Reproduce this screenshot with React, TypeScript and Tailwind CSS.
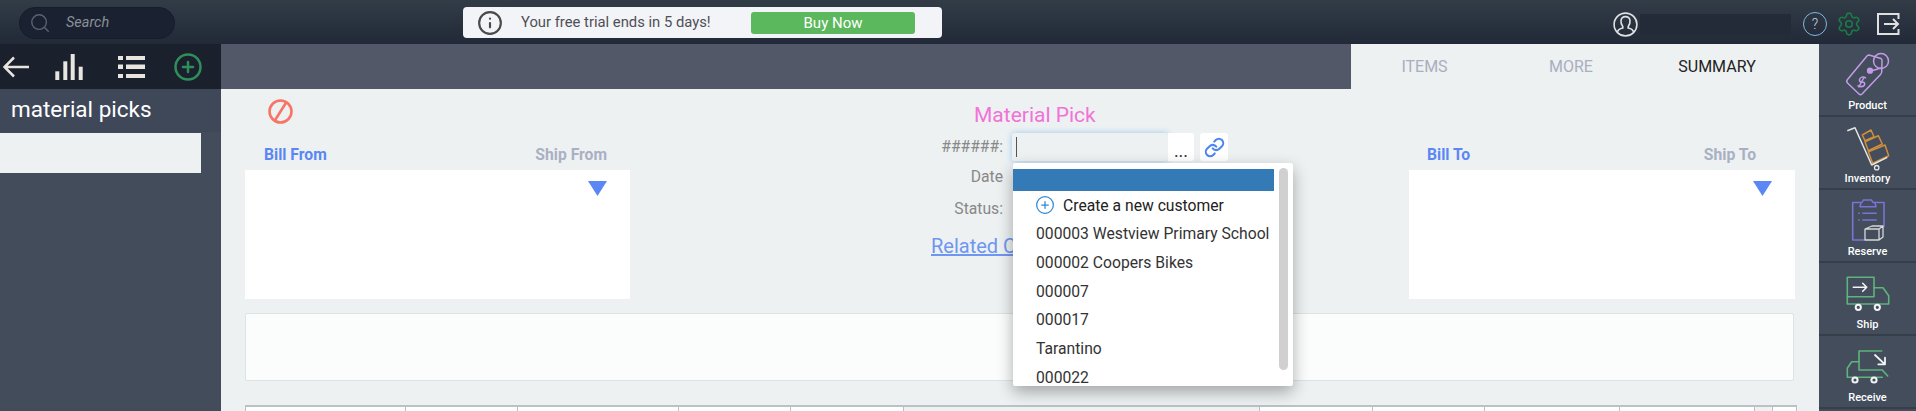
import React from "react";
import { CirclePlus, Info, Link, Search, Settings } from "lucide-react";

const TagIcon = () => (
  <svg width="50" height="44" viewBox="0 0 50 44" fill="none" stroke="#c39be8" strokeWidth="1.5" strokeLinejoin="round">
    <path d="M26 3 L38 6.5 Q39 7 39 9 L38.7 20 Q38.5 21.5 37.5 22.5 L19 42 Q17.5 43.5 16 42 L4.5 31 Q3 29.5 4.5 27.5 L24 4 Q25 3 26 3 Z" />
    <circle cx="38" cy="9" r="7.5" />
    <circle cx="27" cy="18.7" r="2.4" fill="#c39be8" />
    <path d="M29 18.7 L38 16" />
    <path d="M23 26 Q18 23.5 16.5 27.5 Q16 30 19 30 Q22.5 30 21.5 33 Q19.5 36 14.5 33.5 M21.5 24.5 L15.5 35.5" />
  </svg>
);

const CartIcon = () => (
  <svg width="50" height="46" viewBox="0 0 50 46" fill="none" strokeLinejoin="round">
    <g stroke="#d18e3c" strokeWidth="1.5">
      <path d="M19.3 10 L28 5 L31 11.7 L22 15.7 Z" />
      <path d="M22 16.7 L35.3 10.7 L39.3 19 L25.3 25.7 Z" />
      <path d="M25.3 26.7 L42 20 L45.7 30.7 L29.7 38.3 Z" />
    </g>
    <path d="M4.3 5.7 L12 2.7 L28.7 40 L44.3 32.3" stroke="#e4e6e8" strokeWidth="1.5" />
    <circle cx="33.7" cy="42.7" r="2.2" stroke="#e4e6e8" strokeWidth="1.3" />
  </svg>
);

const ClipboardIcon = () => (
  <svg width="50" height="44" viewBox="0 0 50 44" fill="none" strokeLinejoin="round">
    <path d="M22 42 H9.7 V4.5 H41 V29" stroke="#7c72d8" strokeWidth="1.6" />
    <path d="M17 8.7 H33 L32 5 Q29 4.5 28.7 2 H20.3 Q20 4.5 18 5 Z" stroke="#7c72d8" strokeWidth="1.5" fill="#434d5b" />
    <path d="M19.3 15.3 H33.7 M19.3 22 H33.7" stroke="#7c72d8" strokeWidth="1.4" />
    <path d="M15.2 15.3 H16.8 M15.2 22 H16.8" stroke="#7c72d8" strokeWidth="1.4" />
    <path d="M22 31 L29 28 H40 V39 L36 42 H22 Z M22 31 H36 V42 M36 31 L40 28" stroke="#d6d8da" strokeWidth="1.3" fill="#434d5b" />
  </svg>
);

const ShipIcon = () => (
  <svg width="50" height="44" viewBox="0 0 50 44" fill="none" strokeLinejoin="round" strokeLinecap="round">
    <g stroke="#5fb37c" strokeWidth="1.6">
      <path d="M4.3 6.3 H31 V25.7 H4.3 Z" />
      <path d="M31 16.7 H40 L45.7 24.7 V33 H4.3 V25.7" />
    </g>
    <path d="M10.3 16.3 H23.7 M19.7 12.3 L23.7 16.3 L19.7 20.3" stroke="#f2f4f5" strokeWidth="1.6" />
    <circle cx="15.3" cy="36.3" r="2.6" stroke="#f2f4f5" strokeWidth="2" fill="#434d5b" />
    <circle cx="34.3" cy="36.3" r="2.6" stroke="#f2f4f5" strokeWidth="2" fill="#434d5b" />
  </svg>
);

const ReceiveIcon = () => (
  <svg width="50" height="44" viewBox="0 0 50 44" fill="none" strokeLinejoin="round" strokeLinecap="round">
    <g stroke="#5fb37c" strokeWidth="1.6">
      <path d="M38.7 7 H16 V26 H39.3 L44.7 32" />
      <path d="M16 17.7 H8.7 L4.3 24.3 V33.3 H39.3" />
    </g>
    <path d="M32 11 L42 20.3 M42 13.7 V20.3 H35.3" stroke="#f2f4f5" strokeWidth="1.8" />
    <circle cx="12" cy="36" r="2.6" stroke="#f2f4f5" strokeWidth="2" fill="#434d5b" />
    <circle cx="31" cy="36" r="2.6" stroke="#f2f4f5" strokeWidth="2" fill="#434d5b" />
  </svg>
);

const sideItems = [
  { label: "Product", icon: <TagIcon /> },
  { label: "Inventory", icon: <CartIcon /> },
  { label: "Reserve", icon: <ClipboardIcon /> },
  { label: "Ship", icon: <ShipIcon /> },
  { label: "Receive", icon: <ReceiveIcon /> },
];

const customers = ["000003 Westview Primary School", "000002 Coopers Bikes", "000007", "000017", "Tarantino", "000022"];

const columns = [
  { w: "w-[160px]", bg: "bg-white" },
  { w: "w-[112px]", bg: "bg-white" },
  { w: "w-[161px]", bg: "bg-white" },
  { w: "w-[112px]", bg: "bg-white" },
  { w: "w-[113px]", bg: "bg-white" },
  { w: "w-[356px]", bg: "bg-[#eff2f3]" },
  { w: "w-[113px]", bg: "bg-white" },
  { w: "w-[112px]", bg: "bg-white" },
  { w: "w-[135px]", bg: "bg-white" },
  { w: "w-[135px]", bg: "bg-white" },
  { w: "w-[18px]", bg: "bg-[#eff2f3]" },
  { w: "w-[25px]", bg: "bg-white" },
];

const AddressBox = ({ left, right, leftClass, rightClass }: { left: string; right: string; leftClass: string; rightClass: string }) => (
  <div className="mt-auto">
    <div className="flex justify-between mb-[5px] text-[15.7px] leading-[20px] font-bold">
      <span className={leftClass}>{left}</span>
      <span className={rightClass}>{right}</span>
    </div>
    <div className="h-[129px] bg-white flex justify-end pt-[11px] pr-[23px]">
      <svg width="19" height="15" viewBox="0 0 19 15">
        <path d="M0 0 H19 L9.5 15 Z" fill="#5b86f5" />
      </svg>
    </div>
  </div>
);

export default function App() {
  return (
    <div className="w-[1916px] h-[411px] overflow-hidden flex flex-col bg-[#edf1f2] [font-family:Roboto,sans-serif]">
      {/* top bar */}
      <div className="h-[44px] shrink-0 flex items-start pt-[7px] bg-gradient-to-b from-[#323c47] to-[#222938]">
        <div className="ml-[19px] w-[156px] h-[32px] rounded-[16px] bg-[#1a2231] border border-[#161c28] flex items-center pl-[9px]">
          <Search size={22} strokeWidth={1.5} className="text-[#5b6470]" />
          <span className="ml-[15px] text-[14.5px] italic text-[#8b8f98]">Search</span>
        </div>
        <div className="ml-[288px] w-[479px] h-[31px] rounded-[4px] bg-[#f3f4f8] flex items-center">
          <Info size={26} strokeWidth={2} className="ml-[14px] text-[#4a4a4a]" />
          <span className="ml-[18px] w-[230px] text-[14.8px] text-[#4f4f55]">Your free trial ends in 5 days!</span>
          <button className="w-[164px] h-[22px] rounded-[3px] bg-[#5cb85c] text-white text-[15px] leading-[22px]">Buy Now</button>
        </div>
        <div className="ml-auto flex items-center mt-[4px] mr-[16px]">
          <svg width="25" height="25" viewBox="0 0 25 25" fill="none" stroke="#dfe1e3" strokeWidth="1.6">
            <circle cx="12.5" cy="12.5" r="11.4" />
            <path d="M4.5 20 Q5 17 9.8 16 L9.8 14.5 Q7.6 12 8 8.5 Q8.6 4.6 12.5 4.6 Q16.4 4.6 17 8.5 Q17.4 12 15.2 14.5 L15.2 16 Q20 17 20.5 20" />
          </svg>
          <div className="ml-[2px] w-[151px] h-[21px] bg-[#232a38]" />
          <div className="ml-[12px] w-[24px] h-[24px] rounded-full border border-[#7fb8e0] flex items-center justify-center text-[14px] leading-none text-[#c4d4e0] font-light">?</div>
          <Settings size={26} strokeWidth={1.5} className="ml-[9px] text-[#1c7a45]" />
          <svg className="ml-[15px]" width="23" height="22" viewBox="0 0 23 22" fill="none" stroke="#e0e0e0" strokeWidth="2">
            <path d="M21.5 6 V1 H1 V21 H21.5 V16" />
            <path d="M7 11 H21 M16 6 L21 11 L16 16" />
          </svg>
        </div>
      </div>

      <div className="flex-1 flex min-h-0">
        {/* left list */}
        <div className="w-[221px] shrink-0 bg-[#434c5b] flex flex-col">
          <div className="h-[45px] bg-[#1a212d] flex items-center">
            <svg className="ml-[3px]" width="26" height="22" viewBox="0 0 26 22" fill="none" stroke="#e8e4de" strokeWidth="2.5">
              <path d="M1.5 11 H26 M11 1.5 L1.5 11 L11 20.5" />
            </svg>
            <svg className="ml-[26px]" width="28" height="26" viewBox="0 0 28 26" fill="#e8e4de">
              <rect x="0.3" y="17.3" width="4" height="8.7" />
              <rect x="8.3" y="7.3" width="4" height="18.7" />
              <rect x="15.7" y="0" width="4" height="26" />
              <rect x="23.7" y="12.7" width="4" height="13.3" />
            </svg>
            <svg className="ml-[35px]" width="27" height="22" viewBox="0 0 27 22" fill="#e8e4de">
              <rect x="0" y="0" width="5" height="4" />
              <rect x="8" y="0" width="19" height="4" />
              <rect x="0" y="8.5" width="5" height="4.5" />
              <rect x="8" y="8.5" width="19" height="4.5" />
              <rect x="0" y="18" width="5" height="4" />
              <rect x="8" y="18" width="19" height="4" />
            </svg>
            <CirclePlus size={30} strokeWidth={2} className="ml-[28px] text-[#2f8f5b]" />
          </div>
          <div className="h-[43px] bg-[#3f4858] pl-[11px] pb-[2px] flex items-center text-[22.5px] text-white">material picks</div>
          <div className="mt-[1px] w-[201px] h-[40px] bg-[#edf1f2]" />
        </div>

        {/* main */}
        <div className="relative flex-1 min-w-0 flex flex-col">
          <div className="h-[45px] shrink-0 flex">
            <div className="flex-1 bg-[#535869]" />
            <div className="w-[468px] flex pr-[27px] text-[16px] items-center">
              <div className="w-[147px] text-center text-[#a9aec0]">ITEMS</div>
              <div className="w-[146px] text-center text-[#a9aec0]">MORE</div>
              <div className="w-[146px] text-center text-[#222]">SUMMARY</div>
            </div>
          </div>

          <div className="h-[210px] shrink-0 flex pl-[24px] pr-[24px]">
            <div className="w-[385px] flex flex-col">
              <svg className="mt-[10px] ml-[23px]" width="25" height="25" viewBox="0 0 25 25" fill="none" stroke="#f87565" strokeWidth="2.6">
                <circle cx="12.5" cy="12.5" r="11" />
                <path d="M18.5 3 L6.5 22" />
              </svg>
              <AddressBox left="Bill From" right="Ship From" leftClass="pl-[19px] text-[#5a87f5]" rightClass="pr-[23px] text-[#aab0c4]" />
            </div>

            <div className="flex-1 flex flex-col">
              <div className="ml-[344px] mt-[14px] text-[21px] leading-[24px] text-[#f272d8]">Material Pick</div>
              <div className="mt-[6px] flex items-center h-[28px]">
                <div className="w-[373px] text-right text-[15.7px] text-[#888]">######:</div>
                <div className="ml-[9px] w-[156px] h-[28px] bg-[#edf1f2] rounded-[2px] shadow-[0_0_6px_rgba(102,175,233,0.6)] flex items-center pl-[4px]">
                  <div className="w-[1px] h-[20px] bg-[#555]" />
                </div>
                <div className="w-[26px] h-[28px] bg-white rounded-r-[3px] flex items-end justify-center text-[18px] leading-[20px] text-[#333]">...</div>
                <div className="ml-[6px] w-[28px] h-[28px] bg-white rounded-[3px] flex items-center justify-center">
                  <Link size={21} strokeWidth={2.4} className="text-[#4f86f0]" />
                </div>
              </div>
              <div className="h-[32px] flex items-center">
                <div className="w-[373px] text-right text-[15.7px] text-[#888]">Date</div>
              </div>
              <div className="h-[32px] flex items-center">
                <div className="w-[373px] text-right text-[15.7px] text-[#888]">Status:</div>
              </div>
              <div className="ml-[301px] mt-[9px] text-[20px] leading-[24px] text-[#6f96f0] underline whitespace-nowrap">Related C</div>
            </div>

            <div className="w-[386px] flex flex-col">
              <AddressBox left="Bill To" right="Ship To" leftClass="pl-[18px] text-[#5a87f5]" rightClass="pr-[39px] text-[#aab0c4]" />
            </div>
          </div>

          <div className="ml-[24px] mt-[14px] w-[1549px] h-[68px] shrink-0 bg-[#fbfcfc] border border-[#dde3e7] rounded-[2px]" />

          <div className="ml-[24px] mt-[24px] w-[1552px] h-[20px] shrink-0 flex border-t-2 border-[#bcc1c4]">
            {columns.map((c, i) => (
              <div key={i} className={`${c.w} ${c.bg} border-l border-[#bcc1c4] last:border-r`} />
            ))}
          </div>

          {/* customer dropdown */}
          <div className="absolute left-[792px] top-[119px] w-[280px] h-[223px] overflow-hidden bg-white rounded-[2px] shadow-[0_6px_16px_rgba(0,0,0,0.32)] pt-[6px]">
            <div className="w-[261px] h-[22px] bg-[#337ab7]" />
            <div className="h-[28.7px] flex items-center pl-[22px] text-[15.7px] text-[#222]">
              <CirclePlus size={20} strokeWidth={1.5} className="text-[#2b88d8]" />
              <span className="ml-[8px]">Create a new customer</span>
            </div>
            {customers.map((name) => (
              <div key={name} className="h-[28.7px] flex items-center pl-[23px] text-[15.7px] text-[#333] whitespace-nowrap">
                {name}
              </div>
            ))}
            <div className="absolute left-[266px] top-[5px] w-[9px] h-[202px] rounded-[5px] bg-[#d0d0d0]" />
          </div>
        </div>

        {/* right actions */}
        <div className="w-[97px] shrink-0 bg-[#434d5b] flex flex-col">
          {sideItems.map((item) => (
            <div key={item.label} className="h-[73px] shrink-0 border-b-2 border-[#363e4a] pt-[8px] flex flex-col items-center">
              <div className="h-[44px]">{item.icon}</div>
              <div className="mt-[3px] text-[11px] leading-[14px] font-medium text-white">{item.label}</div>
            </div>
          ))}
        </div>
      </div>
    </div>
  );
}
